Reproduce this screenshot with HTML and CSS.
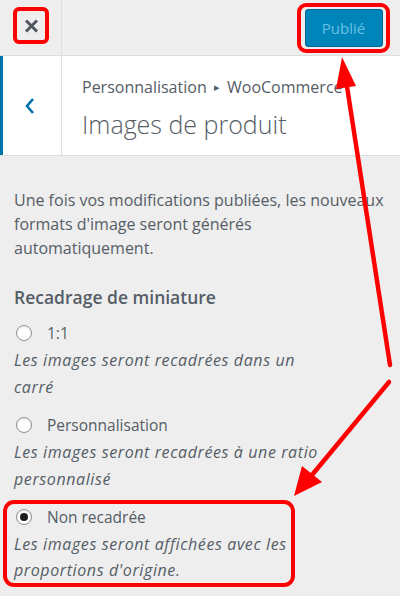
FILE: index.html
```html
<!DOCTYPE html>
<html lang="fr">
<head>
<meta charset="utf-8">
<title>Images de produit</title>
<link rel="stylesheet" href="styles.css">
</head>
<body>
<div class="page">
  <header class="topbar">
    <div class="close-cell">
      <span class="hl hl-close">
        <svg width="15" height="14" viewBox="0 0 15 14"><path d="M2 1.5 L13 12.5 M13 1.5 L2 12.5" stroke="#50575e" stroke-width="3" stroke-linecap="butt"/></svg>
      </span>
    </div>
    <div class="spacer"></div>
    <div class="publish-wrap">
      <span class="hl hl-publish"><button class="publish">Publié</button></span>
    </div>
  </header>
  <section class="section-head">
    <div class="back-cell">
      <svg width="12" height="18" viewBox="0 0 12 18"><path d="M9 2 L3 9 L9 16" fill="none" stroke="#0073aa" stroke-width="2.6"/></svg>
    </div>
    <div class="titles">
      <div class="crumb">Personnalisation <span class="tri">▸</span> WooCommerce</div>
      <h1 class="title">Images de produit</h1>
    </div>
  </section>
  <main class="content">
    <p class="intro">Une fois vos modifications publiées, les nouveaux formats d'image seront générés automatiquement.</p>
    <h2 class="group-title">Recadrage de miniature</h2>
    <div class="option">
      <div class="radio-row"><span class="radio"></span><span class="label">1:1</span></div>
      <p class="desc">Les images seront recadrées dans un carré</p>
    </div>
    <div class="option">
      <div class="radio-row"><span class="radio"></span><span class="label">Personnalisation</span></div>
      <p class="desc">Les images seront recadrées à une ratio personnalisé</p>
    </div>
    <div class="option option-hl">
      <div class="radio-row"><span class="radio checked"></span><span class="label">Non recadrée</span></div>
      <p class="desc">Les images seront affichées avec les proportions d'origine.</p>
    </div>
  </main>
  <svg class="arrows" width="400" height="596" viewBox="0 0 400 596">
    <line x1="390" y1="365" x2="346" y2="80" stroke="#ff0000" stroke-width="4.5" stroke-linecap="round"/>
    <polygon points="342,57 356,86 336,89" fill="#ff0000"/>
    <line x1="389" y1="382" x2="312" y2="475" stroke="#ff0000" stroke-width="4.5" stroke-linecap="round"/>
    <polygon points="294,496 302,466 322,482" fill="#ff0000"/>
  </svg>
</div>
</body>
</html>
```
FILE: styles.css
```css
* { box-sizing: border-box; }
html, body { margin: 0; padding: 0; }
body {
  width: 400px;
  height: 596px;
  overflow: hidden;
  background: #eeeeee;
  font-family: "Open Sans", "Noto Sans", sans-serif;
  color: #555d66;
}
.page { position: relative; width: 400px; height: 596px; }

.topbar {
  display: flex;
  height: 56px;
  border-bottom: 1px solid #dddddd;
  background: #eeeeee;
}
.close-cell {
  width: 62px;
  border-right: 1px solid #dddddd;
  display: flex;
  align-items: flex-start;
  padding: 7px 0 0 13px;
}
.hl {
  display: flex;
  align-items: center;
  justify-content: center;
  border: 4px solid #ff0000;
  border-radius: 6px;
}
.hl-close { width: 36px; height: 37px; }
.spacer { flex: 1; }
.publish-wrap { padding: 3px 10px 0 0; }
.hl-publish { width: 93px; height: 50px; border-radius: 9px; }
.publish {
  width: 78px;
  height: 38px;
  background: #0085ba;
  border: 1px solid #006799;
  border-radius: 3px;
  color: #66c0e3;
  font-family: inherit;
  font-size: 15px;
  padding: 0;
}

.section-head {
  display: flex;
  height: 100px;
  background: #ffffff;
  border-bottom: 1px solid #dddddd;
}
.back-cell {
  width: 62px;
  border-left: 3px solid #0073aa;
  border-right: 1px solid #dddddd;
  display: flex;
  align-items: center;
  justify-content: center;
  padding-right: 4px;
}
.titles { padding: 20px 0 0 20px; white-space: nowrap; overflow: hidden; }
.crumb { font-size: 16px; line-height: 22px; color: #555d66; }
.tri { font-size: 11px; margin: 0 3px; position: relative; top: -2px; }
.title {
  margin: 7px 0 0;
  font-size: 25px;
  line-height: 34px;
  font-weight: 300;
  color: #555d66;
}

.content { padding: 32px 14px 0 14px; }
.intro { margin: 0; font-size: 16px; line-height: 24px; }
.group-title {
  margin: 25px 0 0;
  font-size: 17.5px;
  line-height: 24px;
  font-weight: 600;
  color: #555d66;
}
.option { margin-top: 12px; }
.radio-row { display: flex; align-items: center; height: 24px; padding-left: 2px; }
.radio {
  width: 16px;
  height: 16px;
  border: 1px solid #8c8f94;
  border-radius: 50%;
  background: #ffffff;
  box-shadow: inset 0 1px 2px rgba(0,0,0,0.1);
  display: flex;
  align-items: center;
  justify-content: center;
}
.radio.checked::after {
  content: "";
  width: 8px;
  height: 8px;
  border-radius: 50%;
  background: #1e1e1e;
}
.label { margin-left: 15px; font-size: 15.5px; }
.desc {
  margin: 2px 0 0;
  font-size: 16px;
  letter-spacing: 0.6px;
  line-height: 27px;
  font-style: italic;
  width: 322px;
}
.option-hl {
  margin-top: 7px;
  margin-left: -11px;
  width: 292px;
  padding: 1px 0 0 7px;
  border: 4px solid #ff0000;
  border-radius: 11px;
}
.option-hl .desc { width: auto; line-height: 26px; }

.arrows { position: absolute; left: 0; top: 0; pointer-events: none; }
```
